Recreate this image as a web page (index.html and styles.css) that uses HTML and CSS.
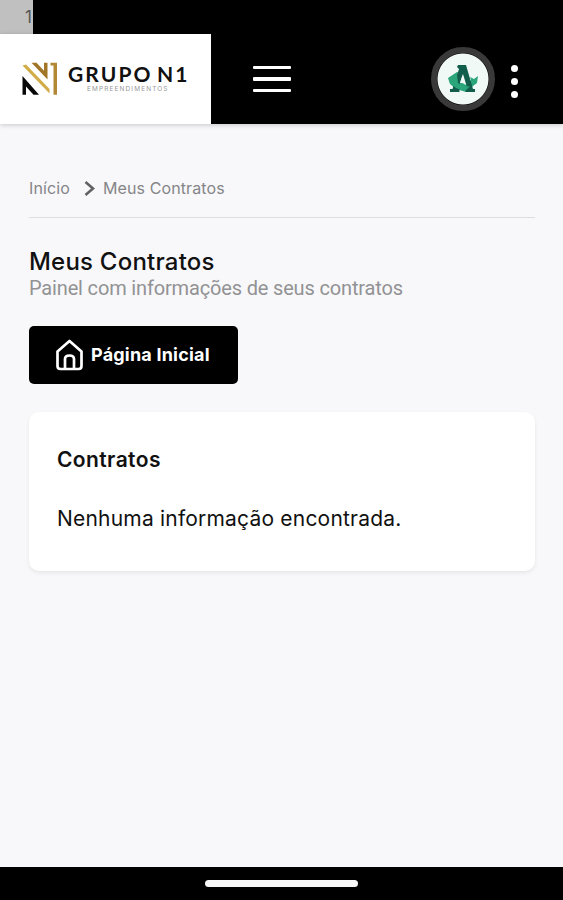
FILE: index.html
```
<!DOCTYPE html>
<html lang="pt-BR">
<head>
  <meta charset="UTF-8" />
  <meta name="viewport" content="width=device-width, initial-scale=1.0"/>
  <title>Meus Contratos</title>
  <link rel="stylesheet" href="styles.css">
</head>
<body>
  <div class="status-bar"><span class="status-time">1</span></div>

  <header class="header">
    <a class="logo" href="#">
      <svg class="logo-mark" width="36" height="34" viewBox="0 0 36 34">
        <path d="M.5 14 17 32.800h-5.500L4 24.500v8.300H.5z" fill="#080808"/>
        <path d="M.5 3.500 4 2.500 27.500 27v4.500z" fill="#d1ac49"/>
        <path d="M9.500.700h5l7.500 8V.700h3.500V17.500z" fill="#a17629"/>
        <path d="M28.500.700H35v32.100h-3.500V3.500h-3z" fill="#b38834"/>
      </svg>
      <span class="logo-text">
        <span class="logo-name">GRUPO N1</span>
        <span class="logo-sub">EMPREENDIMENTOS</span>
      </span>
    </a>
    <button class="menu-btn" aria-label="Menu">
      <span></span><span></span><span></span>
    </button>
    <div class="header-right">
      <div class="avatar">
        <svg width="32" height="30" viewBox="0 0 32 30">
          <path d="M1 14 10 8l5 2-3 7 7 4 5-5-1-3 4 2 4-3-1 7-4 3-7 6-10-3-6-5z" fill="#2aa67a"/>
          <path d="M11 1h8l7 24h2v3H18.500v-3h2l-4.500-15-5 15h1.500v3H3v-3h2.500L12 5l-2-2z" fill="#125e4d"/>
          <path d="m2 14 8-3 1 8 6 4 6-1-5 5-9-3-6-5z" fill="#2aa67a"/>
          <path d="m15.500 11 2.500 8h-5z" fill="#f1f9f7"/>
        </svg>
      </div>
      <button class="more-btn" aria-label="Mais">
        <span></span><span></span><span></span>
      </button>
    </div>
  </header>

  <main class="content">
    <nav class="breadcrumb">
      <a class="crumb-home" href="#">Início</a>
      <svg width="11" height="16" viewBox="0 0 11 16"><path d="m1.500 2 7.500 6.500-7.500 6.500" fill="none" stroke="#626266" stroke-width="2.600"/></svg>
      <span class="crumb-current">Meus Contratos</span>
    </nav>

    <h1 class="title">Meus Contratos</h1>
    <p class="subtitle">Painel com informações de seus contratos</p>

    <a class="btn" href="#">
      <svg width="28" height="32" viewBox="0 0 28 32" fill="none" stroke="#fff" stroke-width="2.700" stroke-linejoin="round">
        <path d="M1.500 12.500 13.500 2l12 10.500V27q0 3-3 3h-18q-3 0-3-3z"/>
        <path d="M9 30V20q0-3.500 4.500-3.500T18 20v10"/>
      </svg>
      <span class="btn-label">Página Inicial</span>
    </a>

    <section class="card">
      <h2 class="card-title">Contratos</h2>
      <p class="card-text">Nenhuma informação encontrada.</p>
    </section>
  </main>

  <footer class="nav-bar"><div class="nav-handle"></div></footer>
</body>
</html>
```
FILE: styles.css
```
* {
  box-sizing: border-box;
}

body {
  margin: 0;
  height: 900px;
  display: flex;
  flex-direction: column;
  background: #f8f8fb;
  color: #111;
  font-family: "Inter", "Roboto", sans-serif;
  overflow: hidden;
}

h1, h2, p {
  margin: 0;
  white-space: nowrap;
}

a {
  color: inherit;
  text-decoration: none;
}

button {
  padding: 0;
  border: none;
  background: none;
}

.status-bar {
  height: 34px;
  background: #000;
}

.status-time {
  display: block;
  width: 33px;
  height: 34px;
  padding-right: 1px;
  background: #c0c0c0;
  color: #555;
  font-size: 17px;
  line-height: 35px;
  text-align: right;
}

.header {
  display: flex;
  align-items: center;
  height: 90px;
  background: #000;
  box-shadow: 0 1px 5px rgba(0, 0, 0, 0.2);
}

.logo {
  display: flex;
  width: 211px;
  height: 90px;
  padding: 28px 0 0 22px;
  background: #fff;
}

.logo-text {
  display: flex;
  flex-direction: column;
  margin-left: 10px;
}

.logo-name {
  color: #111;
  font-family: "Lato", sans-serif;
  font-size: 21px;
  font-weight: bold;
  line-height: 23px;
  letter-spacing: 2.1px;
  word-spacing: -3px;
  white-space: nowrap;
}

.logo-sub {
  margin-left: 19px;
  color: #999;
  font-size: 6.5px;
  line-height: 8px;
  letter-spacing: 1.1px;
}

.menu-btn {
  display: flex;
  flex-direction: column;
  gap: 8px;
  margin-left: 42px;
}

.menu-btn span {
  width: 38px;
  height: 3.500px;
  border-radius: 1px;
  background: #fff;
}

.header-right {
  display: flex;
  align-items: center;
  gap: 16px;
  margin-left: auto;
  padding-right: 45px;
}

.avatar {
  display: flex;
  align-items: center;
  justify-content: center;
  width: 64px;
  height: 64px;
  border: 6px solid #393939;
  border-radius: 50%;
  background: radial-gradient(circle, #f1f9f7 25px, #000 26px);
}

.more-btn {
  display: flex;
  flex-direction: column;
  gap: 6px;
  padding-top: 4px;
}

.more-btn span {
  width: 7px;
  height: 7px;
  border-radius: 50%;
  background: #fff;
}

.content {
  flex: 1;
  padding: 46px 28px 0 29px;
}

.breadcrumb {
  display: flex;
  align-items: center;
  height: 48px;
  padding-bottom: 11px;
  border-bottom: 1.500px solid #dedee1;
  color: #858588;
  font-size: 16px;
  letter-spacing: 0.1px;
}

.crumb-home {
  width: 55px;
}

.crumb-current {
  margin-left: 8px;
}

.title {
  margin-top: 29px;
  font-size: 24px;
  font-weight: 500;
  line-height: 30px;
  letter-spacing: 0.22px;
}

.subtitle {
  color: #929294;
  font-family: "Roboto", sans-serif;
  font-size: 20px;
  line-height: 22px;
  letter-spacing: -0.16px;
}

.btn {
  display: flex;
  align-items: center;
  width: 209px;
  height: 58px;
  margin-top: 27px;
  padding-left: 27px;
  border-radius: 5px;
  background: #000;
  color: #fff;
  font-size: 18px;
  font-weight: bold;
}

.btn-label {
  margin-left: 7px;
  padding-bottom: 2px;
  letter-spacing: 0.2px;
  white-space: nowrap;
}

.card {
  height: 159px;
  margin-top: 28px;
  padding: 33px 28px;
  border-radius: 10px;
  background: #fff;
  box-shadow: 0 2px 4px rgba(0, 0, 0, 0.07);
}

.card-title {
  font-size: 21px;
  font-weight: 600;
  line-height: 30px;
  letter-spacing: 0.4px;
}

.card-text {
  margin-top: 29px;
  font-size: 21px;
  line-height: 30px;
  letter-spacing: 0.2px;
}

.nav-bar {
  display: flex;
  justify-content: center;
  height: 33px;
  padding-top: 13px;
  background: #000;
}

.nav-handle {
  width: 153px;
  height: 7px;
  border-radius: 4px;
  background: #f7f7f7;
}
```
